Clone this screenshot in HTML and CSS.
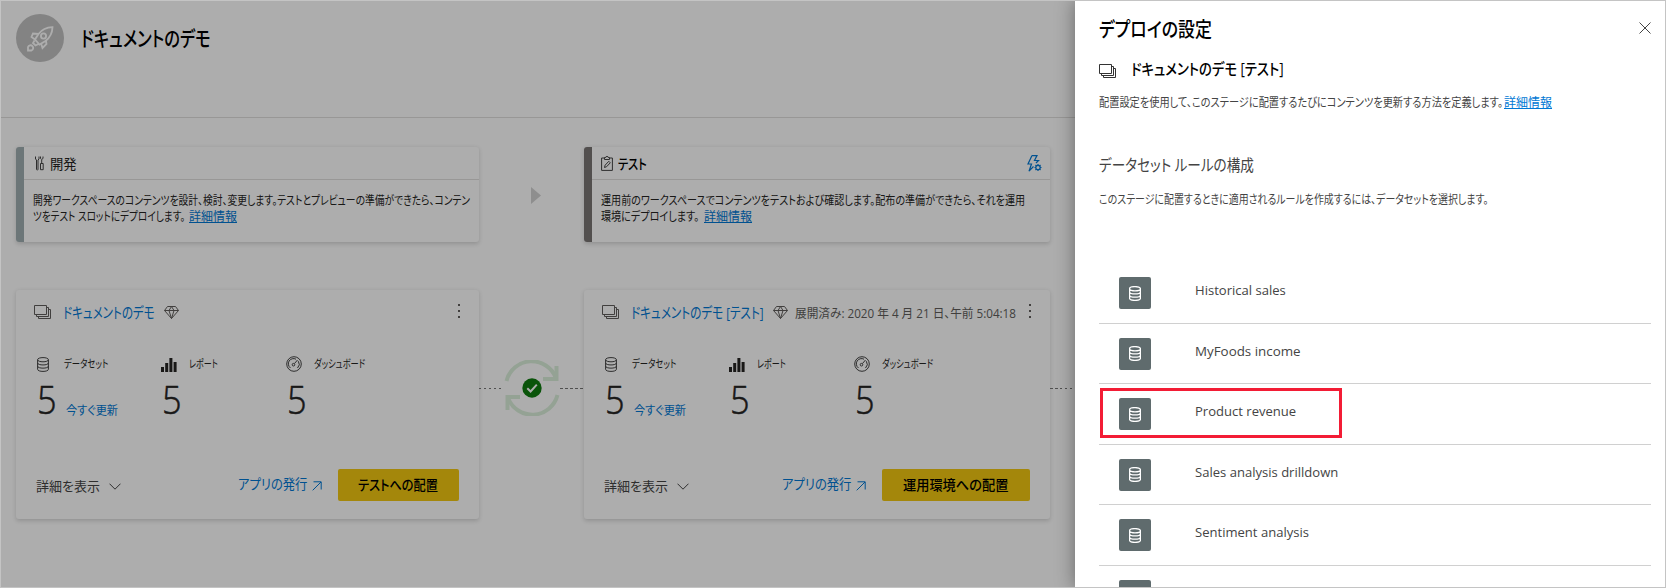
FILE: index.html
```html
<!DOCTYPE html>
<html lang="ja">
<head>
<meta charset="utf-8">
<title>デプロイの設定</title>
<link rel="stylesheet" href="styles.css">
</head>
<body>
<svg class="defs" aria-hidden="true">
  <symbol id="i-stack" viewBox="0 0 17 14"><path d="M.5.5h12v9H.5zM12.5 2.5h2v9h-12v-2M14.500 4.500h2v9h-12v-2"/></symbol>
  <symbol id="i-gem" viewBox="0 0 15 13"><path d="M3.500.5h8l3 4-7 8-7-8zM.5 4.500h14M5 4.500l2.500 8 2.500-8M5 4.500l2.500-4 2.500 4"/></symbol>
  <symbol id="i-db" viewBox="0 0 12 15"><path d="M.6 2.700v9.600c0 2.800 10.800 2.800 10.800 0V2.700M.6 2.700c0 2.800 10.800 2.800 10.800 0S.6-.1.6 2.700zM.6 6c0 2.600 10.800 2.600 10.800 0M.6 9.200c0 2.600 10.800 2.600 10.800 0"/></symbol>
  <symbol id="i-bars" viewBox="0 0 16 14"><path d="M0 9h3v5H0zM4.200 5h3v9h-3zM8.400 0h3v14h-3zM12.600 4h3v10h-3z"/></symbol>
  <symbol id="i-gauge" viewBox="0 0 16 16"><circle cx="8" cy="8" r="7.300"/><path d="M4.500 12a5.200 5.200 0 0 1 5.500-8.800M12.300 5.200A5.200 5.200 0 0 1 11.500 12M8.500 7.500 11.500 4"/><circle cx="7.500" cy="8.700" r="1.300"/></symbol>
  <symbol id="i-down" viewBox="0 0 12 7"><path d="M.5.7 6 6.200 11.500.7"/></symbol>
  <symbol id="i-out" viewBox="0 0 10 10"><path d="M.7 9.300 9 1M1.500.8h7.700v7.700"/></symbol>
</svg>
<div class="app">
  <header class="top">
    <span class="avatar"><svg viewBox="0 0 48 48"><path d="M36.500 13.200c-6 .3-10.500 2.300-14 6.800l-3.500 5.500 4.500 5 6-3.500c4.500-3.500 6.800-8 7-13.800zM22.500 20l-5.500-.5-1.500 3.500 3.500 2.500M30 27l.5 3-4 4-1.500-5M18.500 26.500l-1.500 2.500 2.500 2.500 3-1.500"/><circle cx="27.500" cy="22" r="2.600"/><path d="M12 36.500v-3.500a2.700 2.700 0 1 1 3.500 3.500z"/></svg></span>
    <h1><span class="fit t-title">ドキュメントのデモ</span></h1>
  </header>
  <main class="board">
    <section class="stage dev">
      <div class="stage-head"><svg class="ic-tools" viewBox="0 0 9 15"><path d="M.5.5v2.500l1 1v9.500a.8.8 0 0 0 1.500 0V4l1-1V.5M5.500.5v2l1.200 1 1.300-1v-2M6.700 4v3.500M5.500 7.500h2.700v6.200H5.500z"/></svg><h2><span class="fit t-dev">開発</span></h2></div>
      <p><span class="fit t-d1">開発ワークスペースのコンテンツを設計、検討、変更します。テストとプレビューの準備ができたら、コンテン</span><br><span class="fit t-d2">ツをテスト スロットにデプロイします。</span><a class="fit t-more">詳細情報</a></p>
    </section>
    <div class="gap-arrow"><svg viewBox="0 0 10 17"><path d="M0 0l10 8.500L0 17z"/></svg></div>
    <section class="stage test">
      <div class="stage-head"><svg class="ic-clip" viewBox="0 0 12 15"><path d="M3.500 2H.6v12.400h10.800V2H8.500M3.500 3.500v-2h1.300a1.200 1.200 0 0 1 2.400 0h1.300v2zM3.500 11.500l.6-2.300 3.700-3.900 1.500 1.500-3.700 3.900z"/></svg><h2><span class="fit t-test">テスト</span></h2>
        <svg class="ic-rule" viewBox="0 0 15 17"><path d="M5 .6 1 9h3.500L2 16.200 6.500 11.500M5 .6h5L7.500 5.500h4L9 8"/><circle cx="11" cy="12.500" r="2.200"/><path d="M11 9v1.300M11 14.700V16M7.500 12.500h1.300M13.200 12.500h1.300M8.500 10l1 1M12.500 14l1 1M13.500 10l-1 1M9.500 14l-1 1"/></svg></div>
      <p><span class="fit t-e1">運用前のワークスペースでコンテンツをテストおよび確認します。配布の準備ができたら、それを運用</span><br><span class="fit t-e2">環境にデプロイします。</span><a class="fit t-more">詳細情報</a></p>
    </section>

    <section class="card">
      <div class="card-head"><svg class="ic-stack"><use href="#i-stack"/></svg><a><span class="fit t-c1">ドキュメントのデモ</span></a><svg class="ic-gem"><use href="#i-gem"/></svg><span class="dots"><i></i><i></i><i></i></span></div>
      <div class="stats">
        <div><svg class="ic-db"><use href="#i-db"/></svg><span class="fit t-ds">データセット</span><b>5</b><a class="fit t-now">今すぐ更新</a></div>
        <div><svg class="ic-bars"><use href="#i-bars"/></svg><span class="fit t-rp">レポート</span><b>5</b></div>
        <div><svg class="ic-gauge"><use href="#i-gauge"/></svg><span class="fit t-db">ダッシュボード</span><b>5</b></div>
      </div>
      <div class="card-foot"><span class="fit t-show">詳細を表示</span><svg class="ic-down"><use href="#i-down"/></svg><a class="pub"><span class="fit t-pub">アプリの発行</span><svg class="ic-out"><use href="#i-out"/></svg></a><button class="b1"><span class="fit t-b1">テストへの配置</span></button></div>
    </section>
    <div class="link"><i></i><svg viewBox="0 0 56 56"><path class="ring" d="M2.500 21A26 26 0 0 1 52 18M53.500 35A26 26 0 0 1 4 38"/><path class="ring" d="M52.500 6v13H39M3.500 50V37H16"/><circle cx="28" cy="28" r="9.700"/><path class="tick" d="M23.300 28.300l3.300 3.200 6.200-6.800"/></svg><i></i></div>
    <section class="card">
      <div class="card-head"><svg class="ic-stack"><use href="#i-stack"/></svg><a><span class="fit t-c2">ドキュメントのデモ [テスト]</span></a><svg class="ic-gem"><use href="#i-gem"/></svg><span class="fit t-date">展開済み: 2020 年 4 月 21 日、午前 5:04:18</span><span class="dots"><i></i><i></i><i></i></span></div>
      <div class="stats">
        <div><svg class="ic-db"><use href="#i-db"/></svg><span class="fit t-ds">データセット</span><b>5</b><a class="fit t-now">今すぐ更新</a></div>
        <div><svg class="ic-bars"><use href="#i-bars"/></svg><span class="fit t-rp">レポート</span><b>5</b></div>
        <div><svg class="ic-gauge"><use href="#i-gauge"/></svg><span class="fit t-db">ダッシュボード</span><b>5</b></div>
      </div>
      <div class="card-foot"><span class="fit t-show">詳細を表示</span><svg class="ic-down"><use href="#i-down"/></svg><a class="pub"><span class="fit t-pub">アプリの発行</span><svg class="ic-out"><use href="#i-out"/></svg></a><button class="b2"><span class="fit t-b2">運用環境への配置</span></button></div>
    </section>
    <div class="link tail"><i></i></div>
  </main>
  <div class="shade"></div>
  <aside class="panel">
    <div class="panel-head"><h2><span class="fit t-p1">デプロイの設定</span></h2><svg class="ic-x" viewBox="0 0 12 12"><path d="M.5.5l11 11M11.500.5l-11 11"/></svg></div>
    <h3><svg class="ic-stack"><use href="#i-stack"/></svg><span class="fit t-p2">ドキュメントのデモ [テスト]</span></h3>
    <p class="desc"><span class="fit t-p3">配置設定を使用して、このステージに配置するたびにコンテンツを更新する方法を定義します。</span><a class="fit t-more">詳細情報</a></p>
    <h4><span class="fit t-p5">データセット ルールの構成</span></h4>
    <p class="hint"><span class="fit t-p6">このステージに配置するときに適用されるルールを作成するには、データセットを選択します。</span></p>
    <ul>
      <li><span class="tile"><svg><use href="#i-db"/></svg></span><span class="fit t-li">Historical sales</span></li>
      <li><span class="tile"><svg><use href="#i-db"/></svg></span><span class="fit t-l2">MyFoods income</span></li>
      <li class="picked"><span class="tile"><svg><use href="#i-db"/></svg></span><span class="fit t-li">Product revenue</span></li>
      <li><span class="tile"><svg><use href="#i-db"/></svg></span><span class="fit t-li">Sales analysis drilldown</span></li>
      <li><span class="tile"><svg><use href="#i-db"/></svg></span><span class="fit t-li">Sentiment analysis</span></li>
      <li><span class="tile"></span></li>
    </ul>
  </aside>
</div>
</body>
</html>
```
FILE: styles.css
```css
*, *::before, *::after { box-sizing: border-box; margin: 0; padding: 0; }
html, body { height: 588px; overflow: hidden; }
body { font-family: "Open Sans", "Noto Sans CJK JP", sans-serif; font-feature-settings: "palt"; color: #252423; }
svg { display: block; flex: none; fill: none; stroke: #444; stroke-width: 1; }
.defs { position: absolute; width: 0; height: 0; }
h1, h2, h3, h4, button { font-family: inherit; font-feature-settings: inherit; }
a { color: #0078d4; }

/* Text runs are condensed horizontally: --w is the occupied width, --s the scale. */
.fit { display: inline-block; white-space: nowrap; width: var(--w, auto); transform: scaleX(var(--s, 1)); transform-origin: 0 50%; flex: none; }
.t-title { --w: 130px; --s: .776; }
.t-dev { --s: .95; }
.t-test { --s: .8; }
.t-d1 { --w: 440px; --s: .816; }
.t-d2 { --w: 156px; --s: .8; }
.t-e1 { --w: 440px; --s: .839; }
.t-e2 { --w: 103px; --s: .84; }
.t-c1 { --w: 91px; --s: .768; }
.t-c2 { --w: 132px; --s: .772; }
.t-date { --w: 221px; --s: .933; }
.t-ds { --w: 60px; --s: .76; }
.t-rp { --w: 60px; --s: .73; }
.t-db { --w: 60px; --s: .75; }
.t-now { --w: 60px; --s: .93; }
.t-pub { --w: 69px; --s: .88; }
.t-b1 { --w: 80px; --s: .87; }
.t-b2 { --w: 106px; --s: .943; }
.t-p1 { --w: 113px; --s: .845; }
.t-p2 { --w: 153px; --s: .86; }
.t-p3 { --w: 405px; --s: .85; }
.t-p5 { --w: 155px; --s: .85; }
.t-p6 { --w: 390px; --s: .828; }
.t-li { --s: .967; }
.t-l2 { --s: .99; }

.app { position: relative; width: 1666px; height: 588px; overflow: hidden; background: #fff; }
.app::after { content: ""; position: absolute; inset: 0; border: 1px solid #c4c4c4; pointer-events: none; }
.top { height: 118px; padding: 14px 0 0 16px; display: flex; gap: 17px; border-bottom: 1px solid #e1dfdd; }
.avatar { width: 48px; height: 48px; border-radius: 50%; background: #c2c2c2; }
.avatar svg { stroke: #fff; stroke-width: 1.800; }
.top h1 { font-size: 21px; font-weight: 500; color: #000; line-height: 48px; }

.board { display: grid; grid-template-columns: 463px 105px 466px 100px; grid-template-rows: 95px 229px; row-gap: 48px; padding: 29px 0 0 16px; }
.stage { border-left: 8px solid #a0aeb2; border-radius: 3px; box-shadow: 0 1.600px 4px rgba(0,0,0,.16); }
.stage.test { border-left-color: #7a7574; grid-column: 3 / 4; }
.stage-head { height: 33px; padding: 0 8px 0 11px; display: flex; align-items: center; border-bottom: 1px solid #e1dfdd; }
.stage-head h2 { font-size: 14px; font-weight: 400; line-height: 33px; margin: 1px 0 0 6px; }
.test h2 { font-weight: 500; margin-left: 5px; color: #000; }
.ic-tools { width: 9px; height: 15px; }
.ic-clip { width: 12px; height: 15px; margin-left: -2px; }
.ic-rule { width: 15px; height: 17px; margin-left: auto; stroke: #0078d4; stroke-width: 1.200; }
.stage p { padding: 13px 0 0 9px; font-size: 12px; line-height: 16px; white-space: nowrap; }
.t-more { text-decoration: underline; }
.gap-arrow { padding: 40px 0 0 52px; }
.gap-arrow svg { width: 10px; height: 17px; stroke: none; fill: #d2d2d2; }

.card { grid-row: 2; border-radius: 3px; box-shadow: 0 1.600px 4px rgba(0,0,0,.16); padding: 11px 20px 0 18px; }
.card-head { display: flex; align-items: center; height: 22px; margin-right: -2px; }
.ic-stack { width: 17px; height: 14px; stroke: #605e5c; margin-top: -1px; }
.card-head a { font-size: 15px; font-weight: 400; line-height: 22px; margin-left: 12px; }
.ic-gem { width: 15px; height: 13px; margin: 1px 0 0 10px; stroke: #605e5c; }
.t-date { font-size: 12.500px; margin-left: 7px; color: #605e5c; }
.dots { margin: -2px 0 0 auto; display: flex; flex-direction: column; gap: 4px; width: 3px; }
.dots i { width: 2px; height: 2px; background: #605e5c; }
.stats { display: grid; grid-template-columns: 125px 125px 1fr; margin: 32px 0 0 3px; }
.stats > div { display: grid; grid-template-columns: 27px 1fr; grid-template-rows: 18px 40px; align-items: center; }
.stats svg { margin-left: -1px; }
.stats span { font-size: 11px; line-height: 18px; }
.stats b { font-size: 39px; font-weight: 300; line-height: 40px; margin-top: 12px; transform: scaleX(.88); transform-origin: 0 50%; -webkit-text-stroke: .500px #252423; }
.t-now { font-size: 12px; margin: 33px 0 0 2px; }
.ic-db { width: 12px; height: 15px; }
.stats .ic-db { margin-left: 0; }
.ic-bars { width: 16px; height: 14px; }
.stats .ic-bars { stroke: none; fill: #252423; margin-top: 1px; }
.ic-gauge { width: 16px; height: 16px; }
.card-foot { margin-top: 56px; height: 32px; display: flex; align-items: center; padding-left: 2px; font-size: 13px; color: #444; }
.ic-down { width: 12px; height: 7px; margin: 2px 0 0 9px; }
.pub { display: flex; align-items: center; margin-left: auto; font-size: 14px; line-height: 28px; padding-bottom: 2px; }
.ic-out { width: 10px; height: 10px; margin: 4px 0 0 5px; stroke: #0078d4; }
.card-foot button { height: 32px; border: 0; border-radius: 2px; background: #f2c811; color: #000; font-size: 14px; font-weight: 500; margin-left: 16px; text-align: left; padding: 0 0 3px 20px; }
.card-foot .b1 { width: 121px; }
.card-foot .b2 { width: 148px; padding-left: 21px; }

.link { grid-row: 2; grid-column: 2; display: flex; align-items: flex-start; padding-top: 70px; }
.link i { flex: 1; height: 1px; margin-top: 28px; background: repeating-linear-gradient(90deg, #777 0 2.500px, transparent 2.500px 5px); }
.link svg { width: 56px; height: 56px; stroke: none; }
.link circle { fill: #107c10; }
.link .ring { stroke: #dbefdb; stroke-width: 4; }
.link .tick { stroke: #fff; stroke-width: 2; }
.link.tail { grid-column: 4; }

.shade { position: absolute; inset: 0; background: rgba(0,0,0,.32); }
.panel { position: absolute; inset: 0 0 0 1075px; background: #fff; padding: 0 15px 0 24px; box-shadow: 0 0 18px rgba(0,0,0,.4); color: #444; }
.panel-head { height: 56px; display: flex; justify-content: space-between; align-items: center; }
.panel h2 { font-size: 20px; font-weight: 500; color: #000; }
.ic-x { width: 12px; height: 12px; }
.panel h3 { display: flex; align-items: center; gap: 15px; height: 26px; font-size: 15.500px; font-weight: 500; color: #000; line-height: 24px; }
.panel h3 .ic-stack { margin-top: 3px; stroke: #333; }
.desc, .hint { font-size: 12px; line-height: 20px; display: flex; }
.desc { margin-top: 11px; }
.panel h4 { font-size: 16px; font-weight: 400; line-height: 24px; margin-top: 40px; }
.hint { margin-top: 13px; }
.panel ul { list-style: none; margin-top: 53px; }
.panel li { height: 60.500px; border-bottom: 1px solid #d0d0d0; display: flex; align-items: flex-start; padding: 14px 0 0 20px; position: relative; font-size: 13.500px; }
.tile { width: 32px; height: 32px; border-radius: 2px; background: #5f6b6d; display: grid; place-items: center; margin-right: 44px; flex: none; }
.tile svg { width: 12px; height: 15px; stroke: #fff; stroke-width: 1.300; }
.panel li .fit { line-height: 27px; }
.picked::before { content: ""; position: absolute; left: 1px; top: 4px; width: 242px; height: 50px; border: 3px solid #f31c35; }
```
